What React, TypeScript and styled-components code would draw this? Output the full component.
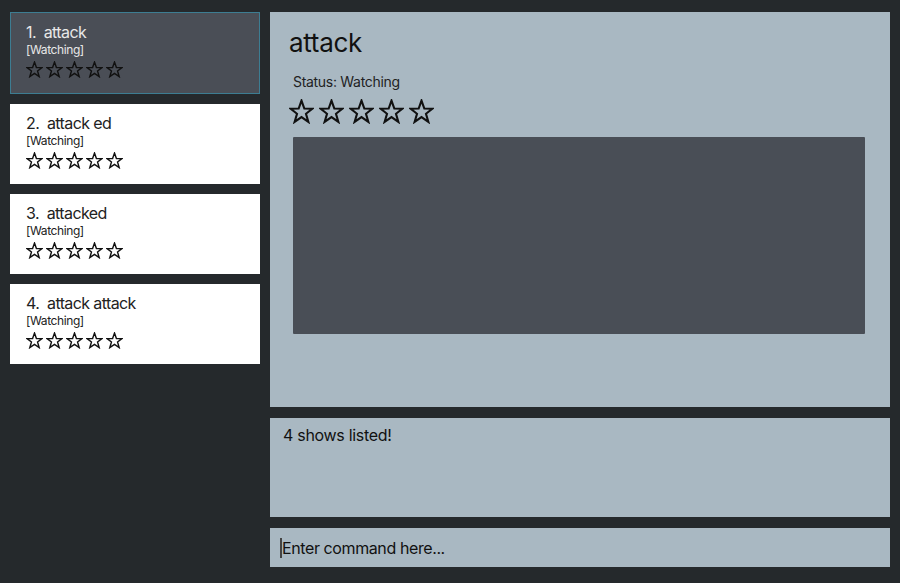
import React from "react";
import styled, { createGlobalStyle } from "styled-components";

const Global = createGlobalStyle`
  html, body { margin: 0; padding: 0; background: #25292c; }
  body { font-family: Inter, "Open Sans", sans-serif; }
`;

const Window = styled.div`
  width: 900px;
  height: 583px;
  box-sizing: border-box;
  display: flex;
  gap: 10px;
  padding: 12px 10px 16px 10px;
  background: #25292c;
`;

const ListColumn = styled.div`
  width: 250px;
  display: flex;
  flex-direction: column;
  gap: 10px;
`;

const Card = styled.div<{ $selected?: boolean }>`
  box-sizing: border-box;
  height: ${(p) => (p.$selected ? "82px" : "80px")};
  padding: ${(p) => (p.$selected ? "9px 15px" : "9px 16px")};
  background: ${(p) => (p.$selected ? "#4a4e56" : "#ffffff")};
  border: ${(p) => (p.$selected ? "1px solid #3d7d92" : "none")};
  color: ${(p) => (p.$selected ? "#e8e8e8" : "#222")};
  display: flex;
  flex-direction: column;
`;

const CardTitle = styled.div`
  font-size: 16px;
  line-height: 20px;
  white-space: pre;
  letter-spacing: -0.6px;
`;

const CardStatus = styled.div`
  font-size: 12px;
  line-height: 16px;
  letter-spacing: -0.4px;
  margin-bottom: 3px;
`;

const StarRow = styled.div<{ $size: number; $gap: number }>`
  display: flex;
  gap: ${(p) => p.$gap}px;
  svg {
    width: ${(p) => p.$size}px;
    height: ${(p) => p.$size}px;
  }
`;

const RightColumn = styled.div`
  flex: 1;
  display: flex;
  flex-direction: column;
  gap: 11px;
`;

const DetailPanel = styled.div`
  height: 395px;
  background: #a9b8c2;
  box-sizing: border-box;
  padding: 14px 25px 0 19px;
  display: flex;
  flex-direction: column;
`;

const DetailTitle = styled.div`
  font-size: 26px;
  line-height: 34px;
  color: #111;
  letter-spacing: -0.3px;
`;

const DetailStatus = styled.div`
  margin-top: 13px;
  margin-left: 4px;
  font-size: 14px;
  line-height: 18px;
  color: #222;
  letter-spacing: -0.3px;
`;

const DetailStars = styled.div`
  margin-top: 8px;
`;

const ImageBox = styled.div`
  margin-top: 13px;
  margin-left: 4px;
  height: 197px;
  background: #494e56;
  border-radius: 1px;
`;

const ResultBox = styled.div`
  height: 99px;
  background: #a9b8c2;
  box-sizing: border-box;
  padding: 7px 13px;
  font-size: 16px;
  line-height: 20px;
  color: #111;
  letter-spacing: -0.3px;
`;

const CommandBox = styled.div`
  height: 39px;
  background: #a9b8c2;
  display: flex;
  align-items: center;
  padding-left: 10px;
  font-size: 16px;
  color: #111;
  letter-spacing: -0.4px;
`;

const Caret = styled.span`
  width: 2px;
  height: 20px;
  background: #444;
`;

const Star = () => (
  <svg viewBox="0 0 24 24" fill="none" stroke="#111" strokeWidth="2" strokeLinejoin="miter">
    <polygon points="12,1.5 14.7,9.1 22.6,9.3 16.3,14.2 18.6,22 12,17.4 5.4,22 7.7,14.2 1.4,9.3 9.3,9.1" />
  </svg>
);

const Stars = ({ size, gap }: { size: number; gap: number }) => (
  <StarRow $size={size} $gap={gap}>
    {[0, 1, 2, 3, 4].map((i) => (
      <Star key={i} />
    ))}
  </StarRow>
);

const shows = ["attack", "attack ed", "attacked", "attack attack"];

export default function App() {
  return (
    <>
      <Global />
      <Window>
        <ListColumn>
          {shows.map((s, i) => (
            <Card key={i} $selected={i === 0}>
              <CardTitle>{`${i + 1}.  ${s}`}</CardTitle>
              <CardStatus>[Watching]</CardStatus>
              <Stars size={17} gap={3} />
            </Card>
          ))}
        </ListColumn>
        <RightColumn>
          <DetailPanel>
            <DetailTitle>attack</DetailTitle>
            <DetailStatus>Status: Watching</DetailStatus>
            <DetailStars>
              <Stars size={25} gap={5} />
            </DetailStars>
            <ImageBox />
          </DetailPanel>
          <ResultBox>4 shows listed!</ResultBox>
          <CommandBox>
            <Caret />
            Enter command here...
          </CommandBox>
        </RightColumn>
      </Window>
    </>
  );
}
